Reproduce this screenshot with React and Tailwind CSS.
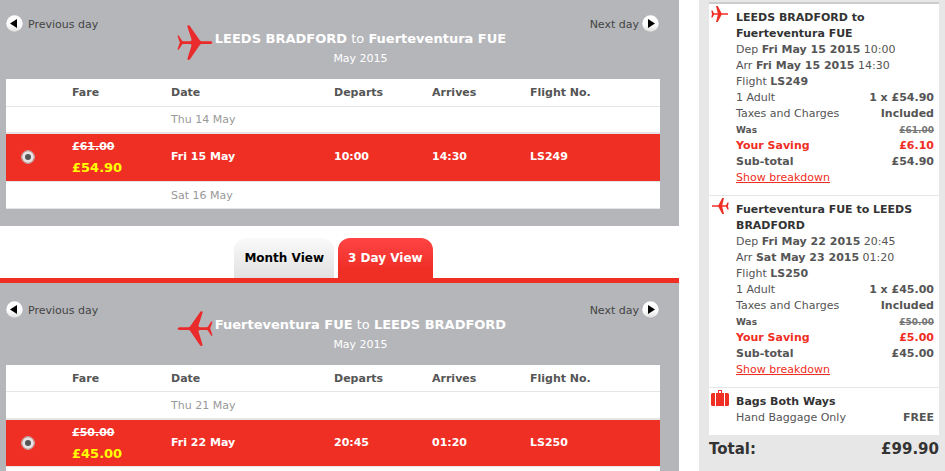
import React from "react";

const outbound = {
  id: "outbound",
  from: "LEEDS BRADFORD",
  to: "Fuerteventura FUE",
  previous: "Thu 14 May",
  next: "Sat 16 May",
  was: "£61.00",
  fare: "£54.90",
  date: "Fri 15 May",
  departs: "10:00",
  arrives: "14:30",
  flight: "LS249",
};

const inbound = {
  id: "inbound",
  from: "Fuerteventura FUE",
  to: "LEEDS BRADFORD",
  previous: "Thu 21 May",
  next: "",
  was: "£50.00",
  fare: "£45.00",
  date: "Fri 22 May",
  departs: "20:45",
  arrives: "01:20",
  flight: "LS250",
};

function Plane({ className, flip }) {
  return (
    <svg viewBox="0 0 36 36" className={className} fill="#ea2b2b" aria-hidden="true">
      <path
        transform={flip ? "matrix(-1 0 0 1 36 0)" : undefined}
        d="M10.3 1.2Q10.4 .2 11.6 .3Q12.6 .4 13.2 1.400L22.6 14.900Q23.4 16.1 24.6 16.200H33.6Q35.4 16.4 35.4 17.6Q35.4 18.8 33.6 19H24.6Q23.4 19.1 22.6 20.3L13.2 34Q12.5 35 11.4 34.9Q10.2 34.8 10.5 33.6L14.5 20.6Q14.7 19 13.2 19H6.4Q5.3 19.1 4.8 20L1.9 24.4Q1.3 25 .9 24.8Q.5 24.6 .7 23.8L2.8 17.6L.7 11.4Q.5 10.6 .9 10.4Q1.3 10.2 1.9 10.8L4.8 15.2Q5.3 16.1 6.4 16.2H13.2Q14.7 16.2 14.5 14.6Z"
      />
    </svg>
  );
}

function SmallPlane({ flip }) {
  return (
    <svg viewBox="0 0 18 16" className="h-4 w-[18px]" fill="#ef2e24" aria-hidden="true">
      <path
        transform={flip ? "matrix(-1 0 0 1 18 0)" : undefined}
        d="M5 0H6.800L10.600 7.200H17V8.800H10.600L6.800 16H5L6.800 8.800H3L1.600 11.400H.300L1 8L.300 4.600H1.600L3 7.200H6.800Z"
      />
    </svg>
  );
}

function Suitcase() {
  return (
    <svg viewBox="0 0 18 16" className="h-4 w-[18px]" fill="#ef2e24" aria-hidden="true">
      <path d="M7 3V0H11V3H13V16H5V3ZM8 1V3H10V1Z" fillRule="evenodd" />
      <path d="M4 3V16H1.500Q0 16 0 14.500V4.500Q0 3 1.500 3ZM14 3H16.500Q18 3 18 4.500V14.500Q18 16 16.500 16H14Z" />
    </svg>
  );
}

function Arrow({ left }) {
  return (
    <svg viewBox="0 0 17 17" className="h-[17px] w-[17px] shrink-0" aria-hidden="true">
      <defs>
        <linearGradient id={left ? "disc-left" : "disc-right"} x1="0" y1="0" x2="0" y2="1">
          <stop offset="0" stopColor="#fff" />
          <stop offset=".6" stopColor="#fbfbfb" />
          <stop offset="1" stopColor="#dedede" />
        </linearGradient>
      </defs>
      <circle cx="8.500" cy="8.500" r="8.200" fill={left ? "url(#disc-left)" : "url(#disc-right)"} />
      <path d={left ? "M4 8.500L11 4V13Z" : "M13 8.500L6 4V13Z"} fill="#000" />
    </svg>
  );
}

function Flights({ leg, flip, top }) {
  return (
    <section className="bg-[#b5b6ba] pb-[17px]">
      <header className={`grid grid-cols-[1fr_auto_1fr] items-start pl-[6px] pr-5 ${top}`}>
        <button type="button" className="flex items-start gap-[5px] text-[#444]">
          <Arrow left />
          <span className="pt-[2px]">Previous day</span>
        </button>
        <div className="flex items-start gap-[2px] pt-[10px] pl-[18px]">
          <Plane flip={flip} className="h-9 w-9 shrink-0" />
          <div className="pt-[5px] text-center text-white">
            <h2 className="text-[13px] leading-[18px]">
              <b>{leg.from}</b> to <b>{leg.to}</b>
            </h2>
            <p className="pt-[3px] leading-4">May 2015</p>
          </div>
        </div>
        <button type="button" className="flex items-start gap-[3px] justify-self-end text-[#444]">
          <span className="pt-[2px]">Next day</span>
          <Arrow />
        </button>
      </header>
      <div className="mr-[19px] ml-[6px] bg-white">
        <table className="w-full table-fixed border-collapse text-left">
          <colgroup>
            <col className="w-[66px]" />
            <col className="w-[99px]" />
            <col className="w-[163px]" />
            <col className="w-[98px]" />
            <col className="w-[98px]" />
            <col />
          </colgroup>
          <thead>
            <tr className="h-[27px] border-b border-[#e5e5e5] text-[#555] *:pt-[2px]">
              <td />
              <th scope="col">Fare</th>
              <th scope="col">Date</th>
              <th scope="col">Departs</th>
              <th scope="col">Arrives</th>
              <th scope="col">Flight No.</th>
            </tr>
          </thead>
          <tbody>
            <tr className="h-[27px] border-b-2 border-[#e5e5e5] text-[#999] *:pt-[2px]">
              <td />
              <td />
              <td colSpan={4}>{leg.previous}</td>
            </tr>
            <tr className="h-12 border-b border-[#e5e5e5] bg-[#ef2e24] font-bold text-white">
              <td className="pl-4">
                <input
                  type="radio"
                  name={leg.id}
                  aria-label={`${leg.date} ${leg.flight}`}
                  defaultChecked
                  className="block h-3 w-3 appearance-none rounded-full border-[3px] border-[#e4e4e4] bg-[#555] outline-1 outline-[#b9a5a3] outline-solid"
                />
              </td>
              <td className="pt-[2px]">
                <s className="block leading-4">{leg.was}</s>
                <span className="block pt-1 text-[13px] leading-[18px] text-[#ff0]">{leg.fare}</span>
              </td>
              <td>{leg.date}</td>
              <td>{leg.departs}</td>
              <td>{leg.arrives}</td>
              <td>{leg.flight}</td>
            </tr>
            <tr className="h-[27px] border-b border-[#e5e5e5] text-[#999] *:pt-[2px]">
              <td />
              <td />
              <td colSpan={4}>{leg.next}</td>
            </tr>
          </tbody>
        </table>
      </div>
    </section>
  );
}

function BasketItem({ icon, title, children }) {
  return (
    <section className="flex border-t border-[#e5e5e5] bg-white pt-[2px] pr-[5px] pb-[9px] pl-[2px] first:border-t-2 first:border-[#ccc]">
      <div className="w-[25px] shrink-0">{icon}</div>
      <div className="min-w-0 flex-1 pt-1">
        <h3 className="font-bold text-[#333]">{title}</h3>
        {children}
      </div>
    </section>
  );
}

function Line({ label, value, className = "" }) {
  return (
    <div className={`flex justify-between ${className}`}>
      <dt>{label}</dt>
      <dd className="font-bold">{value}</dd>
    </div>
  );
}

function BasketLeg({ leg, flip, arriveDay, departDay, saving }) {
  return (
    <BasketItem
      icon={<SmallPlane flip={flip} />}
      title={`${leg.from} to ${leg.to}`}
    >
      <p>
        Dep <b>{departDay}</b> {leg.departs}
      </p>
      <p>
        Arr <b>{arriveDay}</b> {leg.arrives}
      </p>
      <p>
        Flight <b>{leg.flight}</b>
      </p>
      <dl>
        <Line label="1 Adult" value={`1 x ${leg.fare}`} />
        <Line label="Taxes and Charges" value="Included" />
        <Line
          label="Was"
          value={<s className="text-[#777]">{leg.was}</s>}
          className="text-[9px] font-bold"
        />
        <Line label="Your Saving" value={saving} className="font-bold text-[#ef2e24]" />
        <Line label="Sub-total" value={leg.fare} className="font-bold" />
      </dl>
      <a href="#breakdown" className="block w-fit text-[#ef2e24] underline">
        Show breakdown
      </a>
    </BasketItem>
  );
}

export default function App() {
  return (
    <div className="flex h-screen gap-5 overflow-hidden bg-white font-['Verdana','DejaVu_Sans',sans-serif] text-[11px] leading-4">
      <main className="min-w-0 flex-1">
        <Flights leg={outbound} top="h-[79px] pt-[15px]" />
        <nav className="flex justify-center gap-1 border-b-[5px] border-[#ef2e24] pt-3 pr-3 text-[12px] font-bold">
          <button
            type="button"
            className="h-10 rounded-t-xl bg-linear-to-b from-[#fafafa] to-[#e1e1e1] px-[10px] font-bold text-black"
          >
            Month View
          </button>
          <button
            type="button"
            className="h-10 rounded-t-xl bg-linear-to-b from-[#ff4444] to-[#ef2e24] to-80% px-[10px] font-bold text-white"
          >
            3 Day View
          </button>
        </nav>
        <Flights leg={inbound} flip top="h-[82px] pt-[18px]" />
      </main>
      <aside className="w-[246px] shrink-0 bg-[#e7e7e7] pt-[2px] pr-[6px] pl-[10px] text-[#555]">
        <div>
          <BasketLeg
            leg={outbound}
            departDay="Fri May 15 2015"
            arriveDay="Fri May 15 2015"
            saving="£6.10"
          />
          <BasketLeg
            leg={inbound}
            flip
            departDay="Fri May 22 2015"
            arriveDay="Sat May 23 2015"
            saving="£5.00"
          />
          <BasketItem icon={<Suitcase />} title="Bags Both Ways">
            <dl>
              <Line label="Hand Baggage Only" value="FREE" />
            </dl>
          </BasketItem>
        </div>
        <p className="flex justify-between pt-1 text-[15px] leading-5 font-bold text-[#333]">
          <span>Total:</span>
          <span>£99.90</span>
        </p>
      </aside>
    </div>
  );
}
